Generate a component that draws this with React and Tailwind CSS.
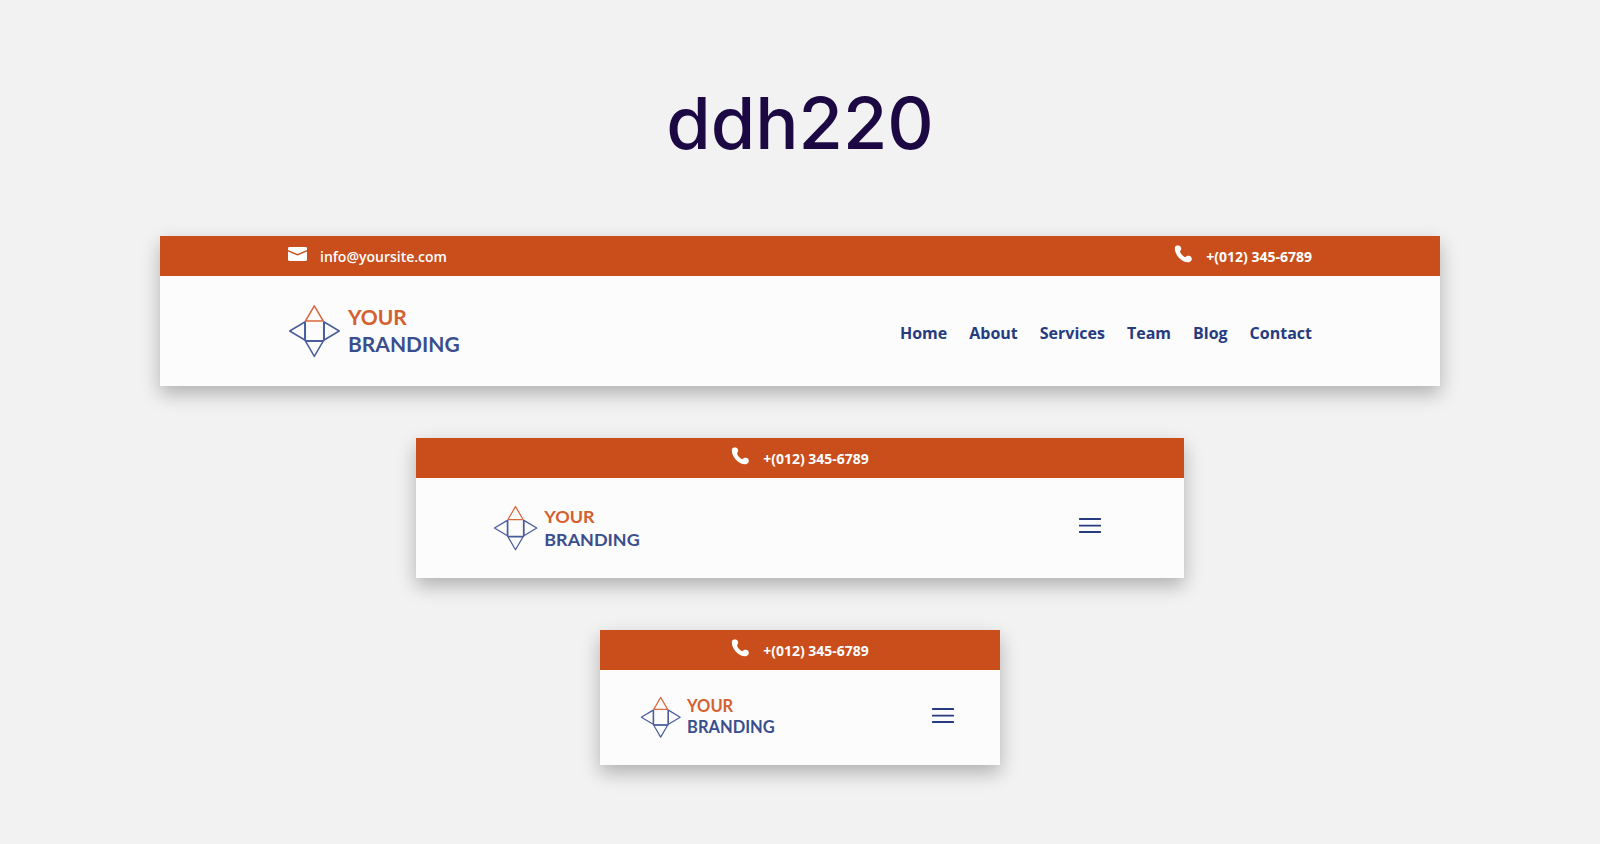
import React from "react";

const NAV = ["Home", "About", "Services", "Team", "Blog", "Contact"];

function PhoneIcon() {
  return (
    <svg viewBox="0 0 18 18" className="mb-1 h-[18px] w-[18px] fill-white" aria-hidden="true">
      <path d="M0.8 3.6C0.7 2.2 1.4 0.9 3 0.6C4.8 0.2 6.3 0.9 6.9 2.3C7.5 3.7 7.2 5 6 6.2C6.4 8.2 8.8 11.2 11.2 12.3C12.2 11.2 13.4 10.6 14.9 10.8C16.6 11 17.9 12.3 17.8 14.1C17.7 15.8 16.6 17 14.8 17.2C11.2 17.5 7.6 15.8 4.9 12.8C2.4 10 0.9 6.8 0.8 3.6Z" />
    </svg>
  );
}

function MailIcon() {
  return (
    <svg viewBox="0 0 20 18" className="mb-1 h-[18px] w-5 fill-white" aria-hidden="true">
      <path d="M1.4 2H17.6C18.5 2 19 2.6 19 3.4V5L10.1 8.8Q9.5 9 8.9 8.8L0 5V3.4C0 2.6 0.5 2 1.4 2Z" />
      <path d="M0 6.4L8.8 10.3Q9.5 10.6 10.2 10.3L19 6.4V14.6C19 15.4 18.5 16 17.6 16H1.4C0.5 16 0 15.4 0 14.6Z" />
    </svg>
  );
}

function Phone() {
  return (
    <a href="tel:+0123456789" className="flex items-center gap-3.5 font-bold">
      <PhoneIcon />
      <span className="pt-0.5">+(012) 345-6789</span>
    </a>
  );
}

function Logo({ className }) {
  return (
    <a href="#home" aria-label="Your Branding">
      <svg viewBox="0 0 172 54" className={className}>
        <g fill="none" strokeWidth="1.5" strokeLinejoin="round">
          <g stroke="#4a5d9b">
            <path d="M17.3 17.5V36.8H35.7V17.5" />
            <path d="M16.8 18L1.7 27L16.8 36Z" />
            <path d="M36.2 18L51.2 27L36.2 36Z" />
            <path d="M17.5 37.2H35.2L26.3 52.4Z" />
          </g>
          <path d="M17.5 17H35.2L26.3 1.8Z" stroke="#d9673f" />
        </g>
        <g fontFamily="Lato, sans-serif" fontWeight="700" fontSize="21">
          <text x="60" y="20.5" fill="#d4602f">YOUR</text>
          <text x="60" y="47.5" fill="#3a4e8e">BRANDING</text>
        </g>
      </svg>
    </a>
  );
}

function MenuButton() {
  return (
    <button type="button" aria-label="Open menu" className="mr-1.5 mb-1">
      <svg viewBox="0 0 22 16" className="h-4 w-[22px] fill-[#263b80]">
        <rect x="0" y="0" width="22" height="2" rx="0.5" />
        <rect x="0" y="6.7" width="22" height="1.8" rx="0.5" />
        <rect x="0" y="13" width="22" height="2" rx="0.5" />
      </svg>
    </button>
  );
}

function Header({ className, bar, children }) {
  return (
    <header className={`max-w-full bg-[#fcfcfc] shadow-[0_8px_18px_rgba(0,0,0,0.27)] ${className}`}>
      <div className="h-10 bg-[#ca4e1b] px-[10%] text-sm font-semibold text-white">{bar}</div>
      {children}
    </header>
  );
}

export default function App() {
  return (
    <main className="flex min-h-screen flex-col items-center gap-[52px] bg-[#f2f2f2] pt-[81px] pb-[79px] font-['Open_Sans',sans-serif]">
      <h1 className="mb-[19px] font-[Inter,sans-serif] text-[72px] leading-[84px] font-medium text-[#1c0842]">ddh220</h1>

      <Header
        className="w-4/5"
        bar={
          <div className="flex h-full items-center justify-between">
            <a href="mailto:info@yoursite.com" className="flex items-center gap-3">
              <MailIcon />
              <span className="pt-0.5">info@yoursite.com</span>
            </a>
            <Phone />
          </div>
        }
      >
        <div className="flex h-[110px] items-center justify-between px-[10%]">
          <Logo className="block w-[172px]" />
          <nav className="flex gap-[22px] pt-1 text-base font-bold text-[#263b80]">
            {NAV.map((n) => (
              <a key={n} href={`#${n.toLowerCase()}`}>{n}</a>
            ))}
          </nav>
        </div>
      </Header>

      <Header className="w-[768px]" bar={<div className="flex h-full items-center justify-center"><Phone /></div>}>
        <div className="flex h-[100px] items-center justify-between px-[10%]">
          <Logo className="block w-[147px]" />
          <MenuButton />
        </div>
      </Header>

      <Header className="w-[400px]" bar={<div className="flex h-full items-center justify-center"><Phone /></div>}>
        <div className="flex h-[95px] items-center justify-between px-[10%]">
          <Logo className="block w-[135px]" />
          <MenuButton />
        </div>
      </Header>
    </main>
  );
}
